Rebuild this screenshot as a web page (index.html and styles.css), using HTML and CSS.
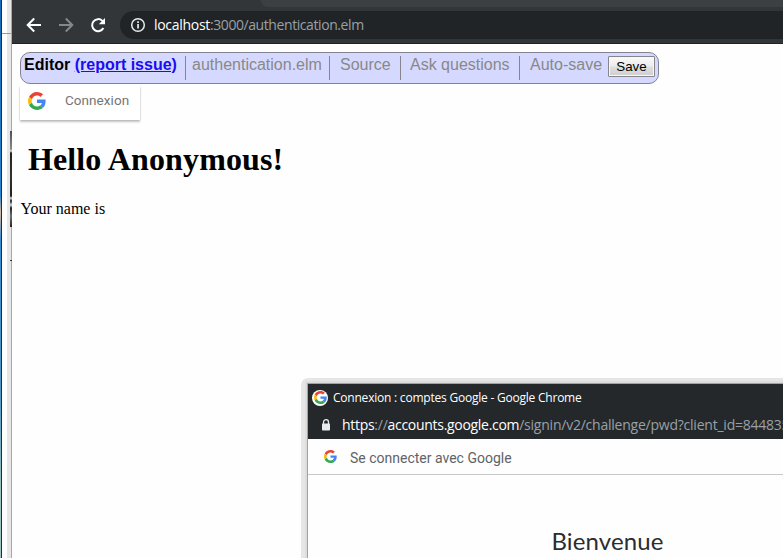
FILE: index.html
```html
<!DOCTYPE html>
<html lang="en">
<head>
<meta charset="utf-8">
<title>authentication.elm</title>
<link rel="stylesheet" href="styles.css">
</head>
<body>
<svg class="defs" width="0" height="0" aria-hidden="true">
  <symbol id="google" viewBox="0 0 48 48">
    <path fill="#ea4335" d="M24 9.5c3.54 0 6.71 1.22 9.21 3.6l6.85-6.85C35.9 2.38 30.47 0 24 0 14.62 0 6.51 5.38 2.56 13.22l7.98 6.19C12.43 13.72 17.74 9.5 24 9.5z"/>
    <path fill="#4285f4" d="M46.98 24.55c0-1.57-.15-3.09-.38-4.55H24v9.02h12.94c-.58 2.96-2.26 5.48-4.78 7.18l7.73 6c4.51-4.18 7.09-10.36 7.09-17.65z"/>
    <path fill="#fbbc05" d="M10.53 28.59c-.48-1.45-.76-2.99-.76-4.59s.27-3.14.76-4.59l-7.98-6.19C.92 16.46 0 20.12 0 24c0 3.88.92 7.54 2.56 10.78l7.97-6.19z"/>
    <path fill="#34a853" d="M24 48c6.48 0 11.93-2.13 15.89-5.81l-7.73-6c-2.15 1.45-4.92 2.3-8.16 2.3-6.26 0-11.57-4.22-13.47-9.91l-7.98 6.19C6.51 42.62 14.62 48 24 48z"/>
  </symbol>
</svg>
<div class="screen">
  <div class="behind">
    <div class="wallpaper"></div>
    <div class="behind-page"></div>
    <div class="behind-shadow"></div>
    <div class="behind-photo"></div>
    <div class="behind-tick"></div>
  </div>
  <main class="browser">
    <div class="tabstrip"><div class="tab"></div><div class="tab-rest"></div></div>
    <div class="navbar">
      <svg class="nav-icon" viewBox="0 0 16 16"><path d="M15 8H2M8.2 1.5 1.7 8l6.5 6.5" stroke="#fff"/></svg>
      <svg class="nav-icon" viewBox="0 0 16 16"><path d="M1 8h13M7.8 1.5 14.3 8l-6.5 6.5" stroke="#85878a"/></svg>
      <svg class="nav-icon" viewBox="0 0 16 16"><path d="M13.4 11A6 6 0 1 1 12.4 3.9L14 5.5" stroke="#fff"/><path d="M15 1v6.2H8.8z" fill="#fff"/></svg>
      <div class="omnibox">
        <svg class="info" viewBox="0 0 16 16"><circle cx="8" cy="8" r="6.3" fill="none" stroke="#e8eaed" stroke-width="1.5"/><path d="M7.2 7h1.7v4.6H7.2zM7.2 4.2h1.7v1.7H7.2z" fill="#e8eaed"/></svg>
        <span class="url"><b>localhost</b>:3000/authentication.elm</span>
      </div>
    </div>
    <div class="page">
      <div class="editor">
        <div class="cell title">Editor <a href="#">(report issue)</a></div>
        <div class="cell file">authentication.elm</div>
        <div class="cell source">Source</div>
        <div class="cell ask">Ask questions</div>
        <div class="cell auto">Auto-save</div>
        <button class="save">Save</button>
      </div>
      <div class="signin"><svg class="g18"><use href="#google"/></svg><span>Connexion</span></div>
      <h1>Hello Anonymous!</h1>
      <p>Your name is</p>
    </div>
  </main>
  <section class="popup">
    <header class="popup-title"><span class="badge"><svg class="g13"><use href="#google"/></svg></span><span class="popup-name">Connexion : comptes Google - Google Chrome</span></header>
    <div class="popup-address">
      <svg class="lock" viewBox="0 0 10 12"><path d="M2.5 5V3.2a2.5 2.5 0 0 1 5 0V5" fill="none" stroke="#e8eaed" stroke-width="1.3"/><rect x="1" y="4.5" width="8" height="7" rx=".8" fill="#e8eaed"/></svg>
      <span class="popup-url"><b>https</b>://<b>accounts.google.com</b>/signin/v2/challenge/pwd?client_id=844835</span>
    </div>
    <div class="connect"><svg class="g13"><use href="#google"/></svg><span>Se connecter avec Google</span></div>
    <div class="welcome">Bienvenue</div>
  </section>
</div>
</body>
</html>
```

FILE: styles.css
```css
* { box-sizing: border-box; }
body { margin: 0; background: #fefefe; overflow: hidden; }
.defs { position: absolute; }
.screen { position: relative; isolation: isolate; display: flex; width: 783px; height: 558px; overflow: hidden; }

.behind { position: relative; display: flex; width: 12px; flex: none; border-right: 1px solid #a9a9a9; }
.wallpaper { width: 2px; border-right: 1px solid #1d3038; background: linear-gradient(#1768b8 0, #2d82cc 35%, #d8b8a0 38%, #3a8bd0 43%, #4f96c4 70%, #9fc5c0 88%); }
.behind-page { width: 5px; background: linear-gradient(#fefefe 33px, #999 33px, #999 34px, #fefefe 34px); }
.behind-shadow { width: 4px; background: linear-gradient(#e6e6e6 33px, #999 33px, #999 34px, #e6e6e6 34px); }
.behind-photo { position: absolute; left: 10px; top: 131px; width: 2px; height: 96px; background: linear-gradient(#465064 0, #8a8a80 18px, #ddd 20px, #222 22px, #33322b 45px, #222 65px, #ddd 67px, #222 70px, #ddd 74px, #222 77px, #69747a 85px, #222); }
.behind-tick { position: absolute; left: 10px; top: 260px; width: 2px; height: 1px; background: #333; }

.browser { flex: 1; min-width: 0; }
.tabstrip { display: flex; height: 7px; background: #323639; }
.tab { width: 249px; border-top-left-radius: 7px; background: #323639; }
.tab-rest { flex: 1; background: #3c4043; border-bottom-left-radius: 7px; }
.navbar { display: flex; align-items: center; height: 37px; padding-left: 14px; gap: 16px; background: #323639; border-bottom: 1px solid #202326; padding-bottom: 1px; }
.nav-icon { width: 16px; height: 16px; flex: none; fill: none; stroke-width: 2; }
.omnibox { display: flex; align-items: center; flex: 1; height: 28px; margin-left: -2px; padding-left: 10px; border-radius: 14px 0 0 14px; background: #202427; }
.info { width: 16px; height: 16px; }
.url { margin-left: 8px; font: 14px/20px "Open Sans", sans-serif; letter-spacing: -0.42px; color: #9aa0a6; white-space: nowrap; }
.url b, .popup-url b { font-weight: 400; color: #fff; }
.url b { letter-spacing: -0.3px; }

.page { padding: 8px; }
.editor { display: flex; width: 639px; height: 32px; border: 1px solid #828291; border-radius: 10px; background: #d6d9ff; padding-top: 3px; font: 16px/18px "Liberation Sans", Arial, sans-serif; color: #888; white-space: nowrap; }
.cell { height: 24px; border-right: 1px solid #85858f; }
.title { width: 165px; padding-left: 3px; font-weight: 700; color: #000; }
.title a { color: #1a0df0; }
.file { width: 144px; padding-left: 6px; }
.source { width: 71px; padding-left: 10px; }
.ask { width: 119px; padding-left: 9px; }
.auto { width: 88px; padding-left: 10px; border: 0; }
.save { width: 47px; height: 21px; padding: 0; border: 1px solid #85858b; border-radius: 1px; background: linear-gradient(#fafafa, #ececec 48%, #dfdfdf 52%, #cfcfcf); box-shadow: inset 0 0 0 1px #f7f7f7; font: 13.33px/18px "Liberation Sans", Arial, sans-serif; color: #000; }
.signin { display: flex; align-items: center; width: 120px; height: 34px; margin-top: 2px; padding: 0 0 5px 8px; background: #fff; box-shadow: 0 2px 2px rgba(0,0,0,.24), 0 0 1px rgba(0,0,0,.24); clip-path: inset(0 -4px -6px -4px); font: 13.5px/16px Roboto, sans-serif; letter-spacing: .05px; color: #757575; }
.signin span { margin-bottom: 2px; }
.g18 { width: 18px; height: 18px; margin-right: 19px; }
.g13 { width: 13px; height: 13px; }
h1 { margin: 21px 0 0 8px; font: 700 32px/36px "Liberation Serif", "Times New Roman", serif; letter-spacing: .12px; color: #000; }
p { margin: 23px 0 0 .5px; font: 16px/18px "Liberation Serif", "Times New Roman", serif; color: #000; }

.popup { position: absolute; left: 307px; top: 383px; width: 476px; height: 175px; border: solid #c99b5b; border-width: 1px 0 0 1px; background: #fefefe; box-shadow: 0 0 0 2px #ddd; }
.popup::before { content: ""; position: absolute; z-index: -1; inset: -6px 0 0 -7px; border-top-left-radius: 7px; background: #e6e6e6; }
.popup-title { display: flex; align-items: center; height: 27px; padding-left: 4px; background: #24282b; }
.badge { display: flex; align-items: center; justify-content: center; width: 16px; height: 16px; border-radius: 50%; background: #fff; }
.popup-name { margin-left: 5px; font: 12px/16px "Open Sans", sans-serif; letter-spacing: -.22px; color: #fff; white-space: nowrap; }
.popup-address { display: flex; align-items: center; height: 28px; padding-left: 13px; background: #24282b; overflow: hidden; }
.lock { width: 10px; height: 12px; flex: none; }
.popup-url { margin-left: 11px; font: 14px/20px "Open Sans", sans-serif; letter-spacing: -.23px; color: #9aa0a6; white-space: nowrap; }
.popup-url b { letter-spacing: -.3px; }
.connect { display: flex; align-items: center; height: 36px; padding-left: 16px; border-bottom: 1px solid #c8c8c8; font: 14px/20px Roboto, sans-serif; color: #5f6368; }
.connect span { margin: 3px 0 0 13px; }
.welcome { margin: 51px 0 0 243.5px; font: 24px/30px Lato, sans-serif; letter-spacing: .1px; color: #2c2d30; }
```
